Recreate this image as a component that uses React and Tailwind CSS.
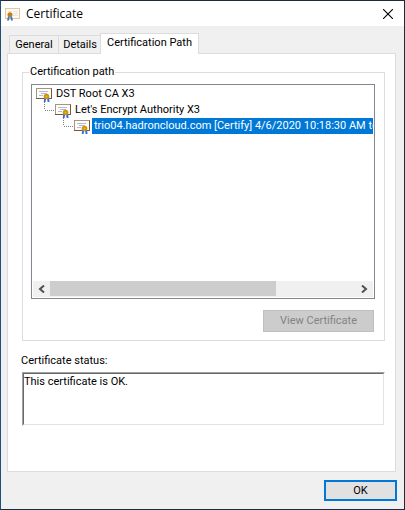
import React, { useState } from 'react';

const UI_FONT = 'font-["Roboto","DejaVu_Sans_Condensed",sans-serif] text-[11px] leading-4';

const TABS = [
  { label: 'General', width: 'w-[50px]' },
  { label: 'Details', width: 'w-[44px]' },
  { label: 'Certification Path', width: 'w-[99px]' },
];

const CHAIN = [
  { name: 'DST Root CA X3', indent: 'pl-[3px]' },
  { name: "Let's Encrypt Authority X3", indent: 'pl-[9px]' },
  { name: 'trio04.hadroncloud.com [Certify] 4/6/2020 10:18:30 AM to', indent: 'pl-[28px]' },
];

const App = () => {
  const [activeTab, setActiveTab] = useState('Certification Path');
  const [selected, setSelected] = useState(2);

  return (
    <div className={`${UI_FONT} min-h-screen flex flex-col bg-[#f0f0f0] text-black border border-[#1d2b40] border-l-[#1f5176]`}>
      <TitleBar />

      <div className="flex-1 flex flex-col pt-[7px] pl-[6px] pr-2">
        {/* tab strip, the active tab covers the top line of the panel */}
        <div role="tablist" className="flex items-end pl-[2px] h-5">
          {TABS.map((tab) => (
            <Tab key={tab.label} tab={tab} active={tab.label === activeTab} onSelect={() => setActiveTab(tab.label)} />
          ))}
        </div>

        <main className="flex-1 flex flex-col bg-white border border-[#dcdcdc] pt-[10px] pl-[14px] pr-[10px]">
          <fieldset className="min-w-0 border border-[#dcdcdc] pt-1 pl-2 pr-[9px] pb-2">
            <legend className="-ml-[2px] px-[1px]">Certification path</legend>
            <div className="flex flex-col h-[215px] border border-[#828790] p-[1px]">
              <ul role="tree" className="flex-1 min-h-0 overflow-hidden">
                {CHAIN.map((cert, index) => (
                  <TreeRow
                    key={cert.name}
                    cert={cert}
                    nested={index > 0}
                    selected={index === selected}
                    onSelect={() => setSelected(index)}
                  />
                ))}
              </ul>
              <ScrollBar />
            </div>
            <div className="flex justify-end mt-[11px] pr-[1px]">
              <button disabled className="w-[111px] h-[22px] bg-[#cccccc] border border-[#bfbfbf] text-[#838383]">
                View Certificate
              </button>
            </div>
          </fieldset>

          <label htmlFor="status" className="mt-3 -ml-[1px]">Certificate status:</label>
          <div className="mt-[3px] flex border border-[#a0a0a0] border-r-white border-b-white">
            <textarea
              id="status"
              readOnly
              defaultValue="This certificate is OK."
              className="flex-1 h-[52px] resize-none outline-none bg-white border border-[#696969] border-r-[#e3e3e3] border-b-[#e3e3e3]"
            />
          </div>
        </main>
      </div>

      <footer className="flex justify-end pt-2 pb-2 pr-[7px]">
        <button className="w-[73px] h-[21px] bg-[#e1e1e1] border-2 border-[#0078d7] leading-[17px]">OK</button>
      </footer>
    </div>
  );
};

const TitleBar = () => (
  <header className="flex items-center h-[25px] bg-white pl-1 pr-[10px]">
    <svg width="16" height="14" viewBox="0 0 16 14" className="shrink-0">
      <rect x="0.5" y="1.5" width="14" height="10" fill="#fffaf2" stroke="#ecc594" />
      <path d="M3 4.5h4M8 4.5h5M8 6.5h5M8 8.5h5" stroke="#dfe6ee" />
      <path d="M3 9.5h1.8L4 13.5H2zM5.2 9.5H7l1 4H6z" fill="#2f74e0" />
      <circle cx="5" cy="7.8" r="2.5" fill="#c08010" />
    </svg>
    <h1 className='ml-[5px] flex-1 font-["Open_Sans",sans-serif] text-xs'>Certificate</h1>
    <button aria-label="Close" className="p-[1px]">
      <svg width="10" height="10" viewBox="0 0 10 10" fill="none" stroke="#000">
        <path d="M0 0l10 10M10 0L0 10" strokeWidth="1.1" />
      </svg>
    </button>
  </header>
);

const Tab = ({ tab, active, onSelect }) => (
  <button
    role="tab"
    aria-selected={active}
    onClick={onSelect}
    className={`${tab.width} shrink-0 -mr-[1px] border border-b-0 border-[#dcdcdc] whitespace-nowrap ${
      active ? 'relative z-10 h-[21px] -mb-[1px] -ml-[1px] pb-[2px] bg-white' : 'h-[18px] bg-[#f0f0f0]'
    }`}
  >
    {tab.label}
  </button>
);

const TreeRow = ({ cert, nested, selected, onSelect }) => (
  <li role="treeitem" aria-selected={selected} onClick={onSelect} className={`flex h-4 whitespace-nowrap ${cert.indent}`}>
    {nested && (
      <svg width="13" height="16" className="shrink-0" fill="none" stroke="#808080" strokeDasharray="1 1" shapeRendering="crispEdges">
        <path d="M2.5 0v8M3 8.5h10" />
      </svg>
    )}
    <CertIcon />
    <span className={`px-[2px] ml-[2px] ${selected ? 'flex-1 bg-[#0078d7] text-white' : ''}`}>{cert.name}</span>
  </li>
);

const CertIcon = () => (
  <svg width="16" height="16" viewBox="0 0 16 16" className="shrink-0">
    <rect x="0.5" y="2.5" width="15" height="10" fill="#fffdf8" stroke="#a8957a" />
    <path d="M0 12.5h15.5V2.5" fill="none" stroke="#6e5a42" />
    <path d="M3 5.5h9M5 7.5h6M3 9.5h4" stroke="#b4bade" />
    <path d="M8.2 12h2L9.6 16H7.8zM11 12h2l.6 4h-2z" fill="#2f6fe0" />
    <circle cx="10.5" cy="10.5" r="2.8" fill="#cf920e" />
    <circle cx="10.5" cy="10.5" r="1" fill="#eab83a" />
  </svg>
);

const ScrollBar = () => (
  <div className="flex h-4 pb-[1px] bg-[#f0f0f0]">
    <button aria-label="Scroll left" className="w-[17px] flex items-center justify-center">
      <svg width="7" height="8" viewBox="0 0 7 8" fill="none" stroke="#505050" strokeWidth="2">
        <path d="M6 .5L2 4l4 3.5" />
      </svg>
    </button>
    <div className="flex-1">
      <div className="h-full w-[74%] bg-[#cdcdcd]" />
    </div>
    <button aria-label="Scroll right" className="w-[17px] flex items-center justify-center">
      <svg width="7" height="8" viewBox="0 0 7 8" fill="none" stroke="#505050" strokeWidth="2">
        <path d="M1 .5L5 4 1 7.5" />
      </svg>
    </button>
  </div>
);

export default App;
